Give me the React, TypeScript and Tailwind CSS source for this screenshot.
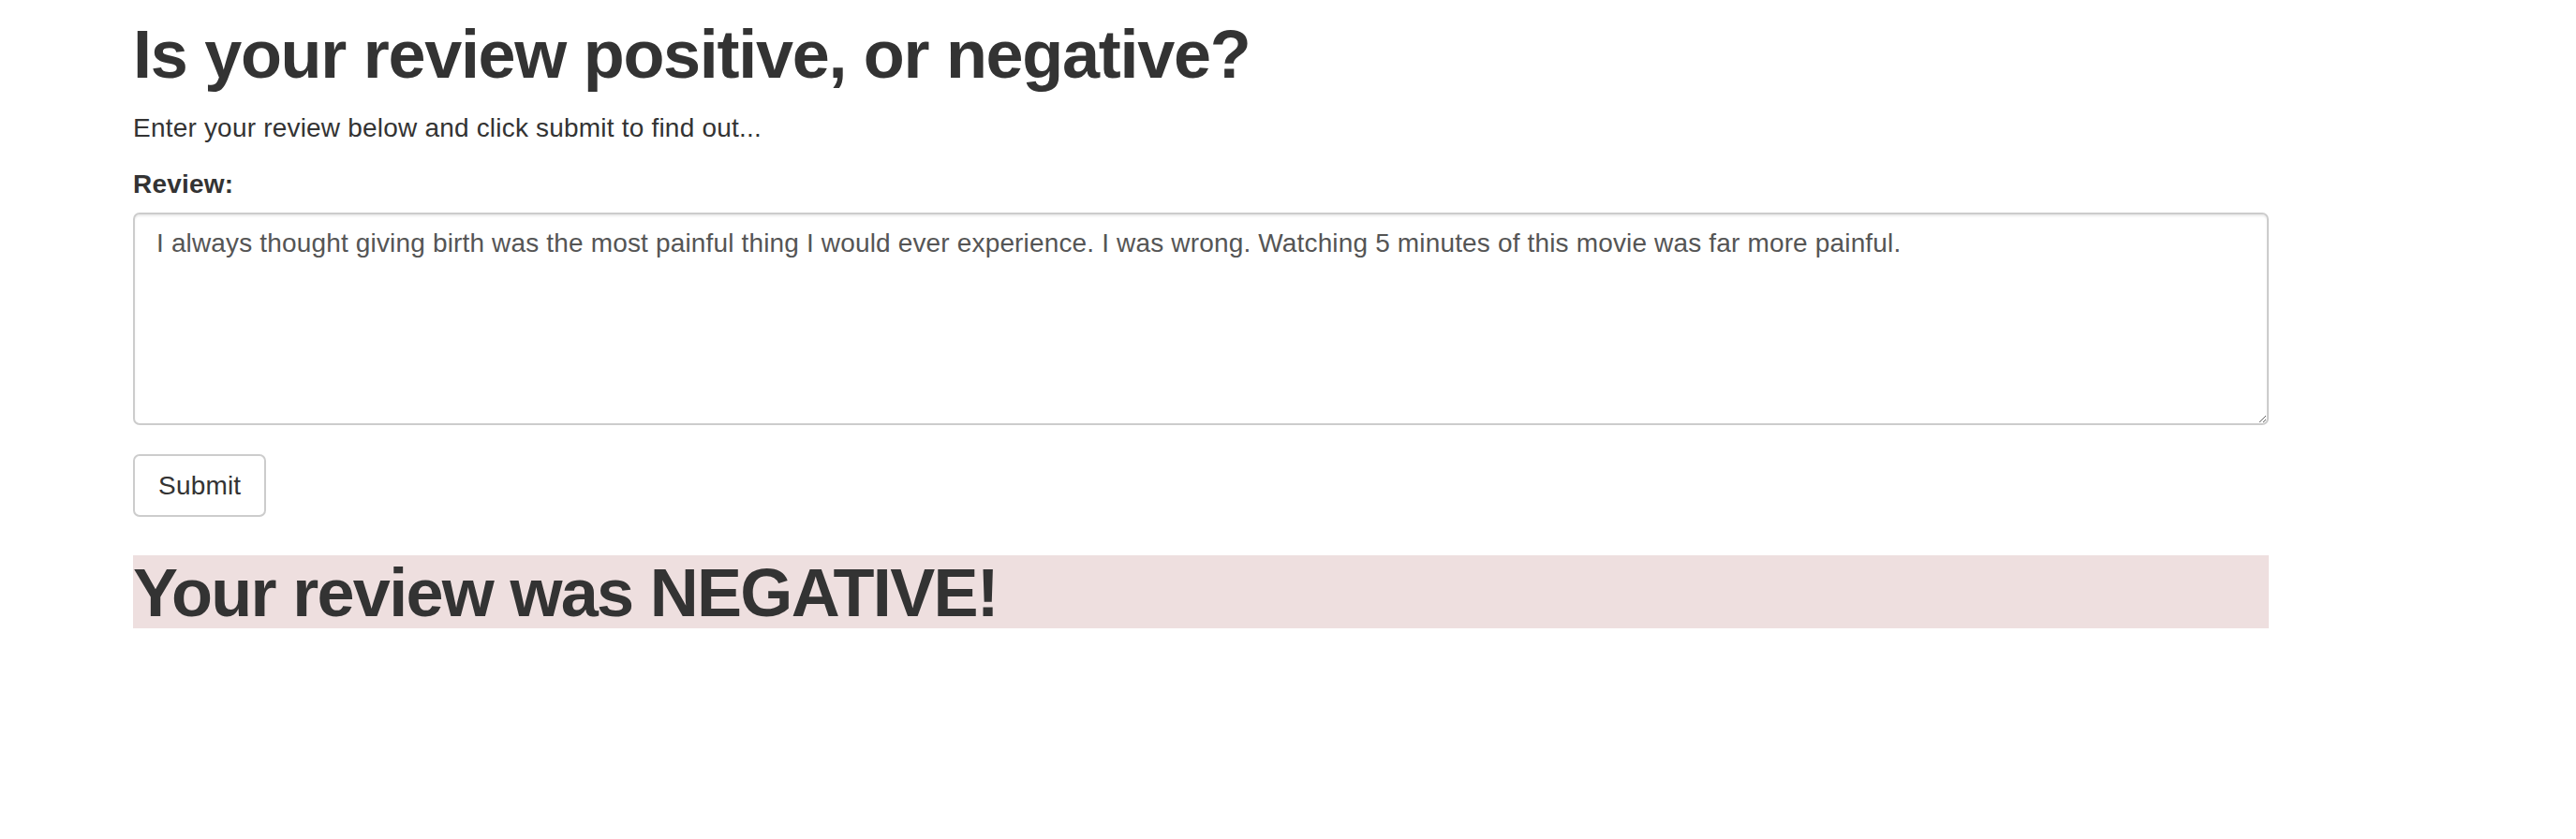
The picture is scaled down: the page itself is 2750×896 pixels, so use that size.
export default function App() {
  return (
    <div className="min-h-[896px] bg-white text-[#333] font-['Liberation_Sans',Arial,sans-serif]">
      <div className="ml-[142px] w-[2280px]">
        {/* heading */}
        <h1 className="pt-[19px] text-[72px] leading-[1.1] font-bold tracking-[-1.3px]">
          Is your review positive, or negative?
        </h1>
        <p className="mt-[19px] text-[28px] leading-[40px] tracking-[0.2px]">
          Enter your review below and click submit to find out...
        </p>

        <form className="mt-[20px]" onSubmit={(e) => e.preventDefault()}>
          <label className="block text-[28px] leading-[40px] font-bold tracking-[0.2px]">Review:</label>
          <textarea
            className="mt-[10px] block w-full h-[227px] rounded-[7px] border-2 border-[#ccc] shadow-[inset_0_2px_2px_rgba(0,0,0,0.075)] px-[23px] pt-[11px] text-[28px] leading-[40px] tracking-[0.16px] text-[#555] outline-none font-['Liberation_Sans',Arial,sans-serif]"
            defaultValue="I always thought giving birth was the most painful thing I would ever experience. I was wrong. Watching 5 minutes of this movie was far more painful."
          />
          <button
            type="submit"
            className="mt-[31px] h-[67px] px-[25px] rounded-[7px] border-2 border-[#ccc] bg-white text-[28px] leading-[40px] tracking-[0.2px] text-[#333]"
          >
            Submit
          </button>
        </form>

        {/* result */}
        <div className="mt-[41px] h-[78px] bg-[#eedfdf]">
          <h2 className="text-[72px] leading-[80px] font-bold tracking-[-1.7px]">Your review was NEGATIVE!</h2>
        </div>
      </div>
    </div>
  );
}
